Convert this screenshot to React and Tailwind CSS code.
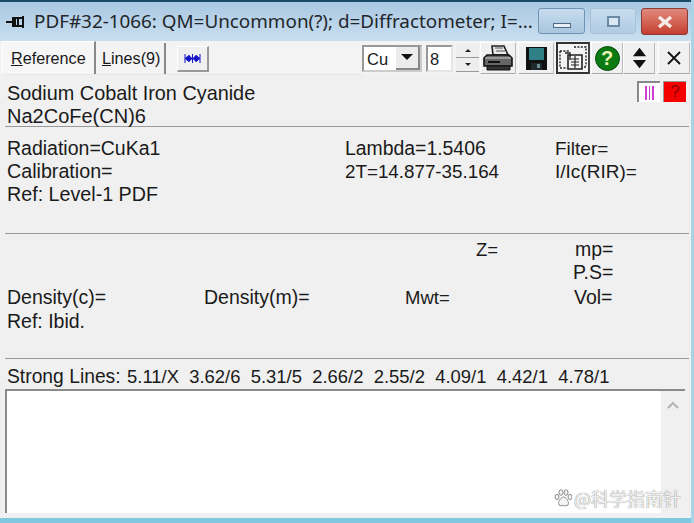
import React from 'react';

const ToolButton = ({ children, pressed, className = '' }) => (
  <div className={`h-[32px] flex items-center justify-center ${className} ${pressed ? 'border-2 border-t-[#333] border-l-[#333] border-r-[#444] border-b-[#333] bg-[#f4f4f4]' : 'border border-t-white border-l-white border-r-[#bbb] border-b-[#aaa] bg-[#f0f0f0]'}`}>
    {children}
  </div>
);

const Row = ({ children, className = '' }) => (
  <div className={`h-[23px] leading-[23px] whitespace-nowrap ${className}`}>{children}</div>
);

const PinIcon = () => (
  <svg width="20" height="16" viewBox="0 0 20 16">
    <path d="M0 8h7M7 3v10M9 3v10M9 4h8v8H9M12 4v8M17 2v12" stroke="#111" strokeWidth="2" fill="none" />
  </svg>
);

const PrinterIcon = () => (
  <svg width="32" height="28" viewBox="0 0 32 28">
    <path d="M10 2h12l4 9H11z" fill="#e8e8e8" stroke="#222" strokeWidth="1.6" />
    <path d="M13 4h8M14 7h9" stroke="#555" strokeWidth="1.2" />
    <path d="M2 14l3-3h22l3 3v8H2z" fill="#666" stroke="#111" strokeWidth="1.6" />
    <path d="M3 14h26" stroke="#ccc" />
    <path d="M5 22h23v4H5z" fill="#333" stroke="#111" />
    <path d="M6 18h12" stroke="#111" strokeWidth="2" />
  </svg>
);

const FloppyIcon = () => (
  <svg width="21" height="23" viewBox="0 0 21 23">
    <path d="M0 0h21v23H0z" fill="#111" />
    <path d="M3 1h15v12H3z" fill="#2f7f86" />
    <path d="M5 16h11v7H5z" fill="#1e2a2c" />
    <path d="M11 17h3v4h-3z" fill="#6d8f92" />
  </svg>
);

const ChipIcon = () => (
  <svg width="28" height="26" viewBox="0 0 28 26">
    <path d="M1 6h10M1 6v17M1 23h7M15 2h12v19M27 22h-3" stroke="#222" strokeWidth="1.4" strokeDasharray="2 1.4" fill="none" />
    <path d="M9 10h14v14H9z" fill="#f4f4f4" stroke="#222" strokeWidth="1.6" />
    <path d="M12 14h8M12 17h8M12 20h8M16 11v12" stroke="#222" strokeWidth="1.2" />
    <path d="M6 8h5v7" stroke="#222" strokeWidth="1.4" fill="none" />
  </svg>
);

const HelpIcon = () => (
  <div className="w-[25px] h-[25px] rounded-full bg-[#0a7a12] border border-[#064a0a] flex items-center justify-center text-[20px] font-bold text-[#e8f4b0] leading-none">?</div>
);

const UpDownIcon = () => (
  <svg width="15" height="24" viewBox="0 0 16 24">
    <path d="M8 1l7 9H1zM1 14h14l-7 9z" fill="#111" />
  </svg>
);

const CloseIcon = () => (
  <svg width="14" height="14" viewBox="0 0 14 14">
    <path d="M1 1l12 12M13 1L1 13" stroke="#111" strokeWidth="1.8" />
  </svg>
);

const PawIcon = () => (
  <svg width="18" height="18" viewBox="0 0 18 18" className="mr-[2px]">
    <g fill="#f4f4f4" stroke="#8a8a8a" strokeWidth="1">
      <ellipse cx="3" cy="8" rx="2" ry="2.6" />
      <ellipse cx="7" cy="3.5" rx="2" ry="2.8" />
      <ellipse cx="12" cy="3.5" rx="2" ry="2.8" />
      <ellipse cx="16" cy="8" rx="2" ry="2.6" />
      <path d="M9.500 8c2.500 0 5 4 5 6.500 0 2.500-3 2.500-5 2-2 .5-5 .5-5-2C4.500 12 7 8 9.500 8z" />
    </g>
  </svg>
);

const Rule = ({ className = '' }) => <div className={`h-px bg-[#9a9a9a] ${className}`} />;

const App = () => {
  return (
    <div className="box-border w-[694px] h-[523px] overflow-hidden flex flex-col border-r-[3px] border-[#a8d4e6] bg-[#f0f0f0] text-[#1a1a1a] text-[19.500px] font-['Liberation_Sans',Arial,sans-serif]">
      {/* Title bar */}
      <div className="h-[41px] shrink-0 flex items-center pl-[6px] border-t-2 border-[#1d4a66] bg-gradient-to-b from-[#a9c8e2] to-[#c9def0]">
        <PinIcon />
        <span className="ml-[8px] w-[500px] text-[18.850px] text-[#22262b] whitespace-nowrap font-['Noto_Sans',sans-serif]">PDF#32-1066: QM=Uncommon(?); d=Diffractometer; I=...</span>
        <div className="flex items-start gap-[5px] ml-[4px]">
          <div className="w-[47px] h-[26px] flex items-end justify-center pb-[5px] rounded-[3px] border border-[#6f93b3] bg-gradient-to-b from-[#c8dcee] to-[#a8c6e0]">
            <div className="w-[18px] h-[5px] bg-[#e8f0f6] border border-[#4d6a85]" />
          </div>
          <div className="w-[46px] h-[26px] flex items-center justify-center rounded-[3px] border border-[#a9c2d8] bg-gradient-to-b from-[#c8dcee] to-[#b0cbe3]">
            <div className="w-[13px] h-[11px] border-2 border-[#6b8aa5] bg-[#dbe7f1]" />
          </div>
          <div className="w-[47px] h-[27px] flex items-center justify-center rounded-[3px] border border-[#8a3d36] bg-gradient-to-b from-[#e0897c] to-[#c43c2e]">
            <svg width="18" height="14" viewBox="0 0 18 14">
              <path d="M3 2l12 10M15 2L3 12" stroke="#f5ece8" strokeWidth="3.4" />
            </svg>
          </div>
        </div>
      </div>

      {/* Tabs and toolbar */}
      <div className="h-[34px] shrink-0 flex items-end pl-[2px] bg-[#f3f3f3]">
        <div className="flex items-end h-[34px] border-b border-[#e6e6e6] w-[360px]">
          <div className="w-[94px] h-[33px] pl-[8px] flex items-center text-[16.200px] bg-[#f6f6f6] border-t border-l border-white border-r-2 border-r-[#888]">
            <span><u>R</u>eference</span>
          </div>
          <div className="w-[70px] h-[31px] pl-[6px] flex items-center text-[16.200px] border-r-2 border-r-[#888]">
            <span><u>L</u>ines(9)</span>
          </div>
          <div className="ml-[11px] mb-[2px] w-[32px] h-[26px] flex items-center justify-center border-r-2 border-b-2 border-r-[#999] border-b-[#999] border-t border-l border-white bg-[#f0f0f0]">
            <svg width="17" height="9" viewBox="0 0 17 9">
              <path d="M1 0v9M16 0v9M8.500 0v9M1 4.500h15M1 4.500l4-3v6zM8 4.500l-3-3v6zM9 4.500l3-3v6zM16 4.500l-4-3v6z" stroke="#1414c8" strokeWidth="1" fill="#1414c8" />
            </svg>
          </div>
        </div>
        <div className="flex items-center h-[34px]">
          <div className="w-[60px] h-[27px] flex border-2 border-t-[#999] border-l-[#999] border-r-[#ccc] border-b-[#ccc] bg-white">
            <span className="w-[32px] pl-[3px] text-[16.500px] leading-[24px]">Cu</span>
            <div className="flex-1 flex items-center justify-center bg-[#ececec] border-r-2 border-b-2 border-r-[#888] border-b-[#888]">
              <div className="w-0 h-0 border-x-[6px] border-t-[6px] border-x-transparent border-t-[#111]" />
            </div>
          </div>
          <div className="ml-[4px] w-[27px] h-[27px] pl-[2px] text-[16.500px] leading-[24px] border-2 border-t-[#999] border-l-[#999] border-r-[#e5e5e5] border-b-[#e5e5e5] bg-white">8</div>
          <div className="ml-[3px] w-[23px] h-[28px] flex flex-col">
            <div className="flex-1 flex items-center justify-center border-b border-[#999] bg-[#eee]">
              <div className="w-0 h-0 border-x-[3px] border-b-[3px] border-x-transparent border-b-[#222]" />
            </div>
            <div className="flex-1 flex items-center justify-center border-b border-[#999] bg-[#eee]">
              <div className="w-0 h-0 border-x-[3px] border-t-[3px] border-x-transparent border-t-[#222]" />
            </div>
          </div>
          <div className="flex ml-[1px]">
            <ToolButton className="w-[36px]"><PrinterIcon /></ToolButton>
            <ToolButton className="w-[36px] ml-[2px]"><FloppyIcon /></ToolButton>
            <ToolButton pressed className="w-[34px] ml-[2px]"><ChipIcon /></ToolButton>
            <ToolButton className="w-[32px] ml-[1px]"><HelpIcon /></ToolButton>
            <ToolButton className="w-[32px]"><UpDownIcon /></ToolButton>
            <ToolButton className="w-[32px] ml-[3px]"><CloseIcon /></ToolButton>
          </div>
        </div>
      </div>

      {/* Phase header */}
      <div className="relative h-[50px] shrink-0 pl-[7px] pt-[7px]">
        <Row className="text-[19.850px]">Sodium Cobalt Iron Cyanide</Row>
        <Row className="text-[20px]">Na2CoFe(CN)6</Row>
        <div className="absolute right-[5px] top-[6px] flex gap-[3px]">
          <div className="w-[23px] h-[21px] flex items-center justify-center gap-[2px] bg-white border-t-2 border-l-2 border-t-[#888] border-l-[#888]">
            <div className="w-[1.500px] h-[14px] bg-[#d040d0]" />
            <div className="w-[1.500px] h-[14px] bg-[#d040d0]" />
            <div className="w-[1.500px] h-[14px] bg-[#d040d0]" />
          </div>
          <div className="w-[23px] h-[21px] flex items-center justify-center bg-[#f40000] text-[17px] text-[#8a0000] border-t border-l border-[#999]">?</div>
        </div>
      </div>

      <Rule className="ml-[5px] mr-[2px] mt-[1px] shrink-0" />

      {/* Experimental conditions */}
      <div className="h-[106px] shrink-0 pl-[7px] pt-[10px] grid grid-cols-[338px_210px_1fr] auto-rows-[23px] leading-[23px]">
        <span>Radiation=CuKa1</span><span className="text-[19.400px]">Lambda=1.5406</span><span className="text-[19px]">Filter=</span>
        <span className="text-[19.700px]">Calibration=</span><span className="text-[18.800px]">2T=14.877-35.164</span><span className="text-[19px]">I/Ic(RIR)=</span>
        <span className="text-[19.700px]">Ref: Level-1 PDF</span>
      </div>

      <Rule className="ml-[5px] mr-[2px] shrink-0" />

      {/* Crystal data */}
      <div className="h-[124px] shrink-0 pl-[7px] pt-[4px]">
        <Row className="flex">
          <span className="ml-[469px] w-[99px] text-[18.500px]">Z=</span>
          <span>mp=</span>
        </Row>
        <Row className="flex">
          <span className="ml-[566px]">P.S=</span>
        </Row>
        <Row className="flex mt-[2px]">
          <span className="w-[197px]">Density(c)=</span>
          <span className="w-[201px]">Density(m)=</span>
          <span className="w-[169px] text-[18.500px]">Mwt=</span>
          <span>Vol=</span>
        </Row>
        <Row className="mt-[1px]">Ref: Ibid.</Row>
      </div>

      <Rule className="ml-[5px] mr-[2px] shrink-0" />

      {/* Strong lines */}
      <div className="h-[30px] shrink-0 pl-[7px] pt-[4px] flex items-baseline text-[18.450px] whitespace-pre">
        <span className="w-[120px] text-[19.300px]">Strong Lines:</span>
        <span>5.11/X  3.62/6  5.31/5  2.66/2  2.55/2  4.09/1  4.42/1  4.78/1</span>
      </div>

      {/* Comment box */}
      <div className="relative ml-[5px] mr-[6px] h-[124px] shrink-0 flex bg-white border-t-2 border-l-2 border-[#8a8a8a]">
        <div className="flex-1" />
        <div className="w-[24px] bg-[#f0f0f0] flex justify-center pt-[10px]">
          <svg width="12" height="8" viewBox="0 0 12 8">
            <path d="M1 7l5-5 5 5" stroke="#b5b5b5" strokeWidth="2.2" fill="none" />
          </svg>
        </div>
        <div className="absolute right-[4px] bottom-[3px] flex items-center text-[18px] leading-[24px] text-[#f2f2f2] [text-shadow:0_0_1px_#555] font-['Noto_Sans_CJK_SC',sans-serif]">
          <PawIcon />
          <span>@科学指南针</span>
        </div>
      </div>

      <div className="flex-1 bg-[#f0f0f0]" />
      <div className="h-[5px] shrink-0 bg-[#7fc8e0]" />
    </div>
  );
};

export default App;
